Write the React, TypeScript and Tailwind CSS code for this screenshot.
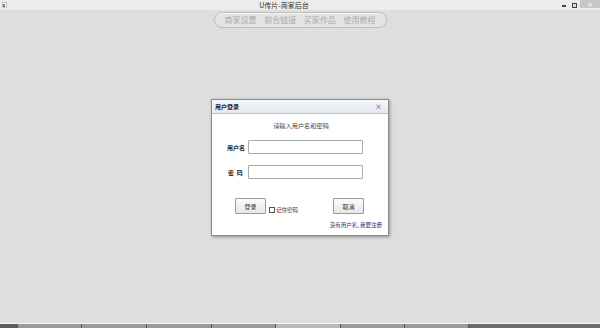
import React from "react";

const font = { fontFamily: '"Noto Sans CJK SC", "Noto Sans", sans-serif' };

export default function App() {
  const segs = [
    { w: 18, c: "bg-[#5c5c5c]" },
    { w: 64, c: "bg-[#9b9b9b]" },
    { w: 65, c: "bg-[#9b9b9b]" },
    { w: 65, c: "bg-[#9b9b9b]" },
    { w: 64, c: "bg-[#9b9b9b]" },
    { w: 65, c: "bg-[#b9b9b9]" },
    { w: 64, c: "bg-[#9b9b9b]" },
    { w: 64, c: "bg-[#9b9b9b]" },
  ];
  return (
    <div className="w-[600px] h-[328px] flex flex-col bg-[#dedede] overflow-hidden" style={font}>
      {/* window title bar */}
      <div className="h-[10px] bg-[#ececec] flex items-center relative">
        <div className="ml-[2px] w-[5px] h-[6px] border border-[#c4c4c4] bg-white flex items-end">
          <div className="w-[2px] h-[3px] bg-[#4f8a96]" />
        </div>
        <div className="flex-1 text-center text-[7px] leading-[10px] text-[#333]">U传片-商家后台</div>
        <div className="flex items-start h-[10px]">
          <div className="w-[6px] h-[10px] flex items-center justify-center mr-[4px]">
            <div className="w-[4px] h-[2px] bg-[#444] mt-[1px]" />
          </div>
          <div className="w-[6px] h-[10px] flex items-center justify-center mr-[3px]">
            <div className="w-[5px] h-[5px] border border-[#444] bg-[#ddd]" />
          </div>
          <div className="w-[20px] h-[8px] bg-[#c6c6c6] flex items-center justify-center text-[7px] leading-none text-white">×</div>
        </div>
      </div>

      {/* body */}
      <div className="flex-1 flex flex-col items-center">
        <div className="mt-[2px] w-[173px] h-[16px] rounded-[8px] border border-[#bdbdbd] bg-[#e3e3e3] shadow-[inset_0_1px_0_#f4f4f4] flex items-center justify-between px-[10px] text-[8px] text-[#ababab]">
          <span>商家设置</span>
          <span>前台链接</span>
          <span>买家作品</span>
          <span>使用教程</span>
        </div>

        {/* dialog */}
        <div className="mt-[71px] w-[178px] h-[137px] border border-[#8c8c8c] bg-white shadow-[1px_1px_3px_rgba(0,0,0,0.35)] flex flex-col">
          <div className="h-[14px] bg-gradient-to-b from-[#f6f8fb] to-[#e4e9f0] border-b border-[#b9c3cf] flex items-center justify-between px-[3px]">
            <span className="text-[6px] font-bold text-[#222]">用户登录</span>
            <span className="text-[7px] text-[#333] mr-[3px] leading-none">×</span>
          </div>
          <div className="flex-1 flex flex-col">
            <div className="mt-[7px] text-center text-[6.2px] leading-[9px] text-[#444] pl-[2px]">请输入用户名和密码</div>
            <div className="mt-[10px] flex items-center h-[14px]">
              <span className="ml-[15px] w-[21px] text-[6px] font-bold text-[#222]">用户名</span>
              <div className="w-[115px] h-[14px] border border-[#a8a8a8] rounded-[1px] bg-white" />
            </div>
            <div className="mt-[11px] flex items-center h-[14px]">
              <span className="ml-[16px] w-[20px] text-[6px] font-bold text-[#222]">密&nbsp;&nbsp;码</span>
              <div className="w-[115px] h-[14px] border border-[#a8a8a8] rounded-[1px] bg-white" />
            </div>
            <div className="mt-[19px] flex items-end h-[16px]">
              <div className="ml-[23px] w-[31px] h-[16px] border border-[#9a9a9a] rounded-[1px] bg-gradient-to-b from-[#fbfbfb] to-[#e4e8ec] flex items-center justify-center text-[6px] text-[#333]">登录</div>
              <div className="ml-[3px] mb-[1px] w-[6px] h-[6px] border border-[#555] bg-white" />
              <span className="ml-[1px] text-[5.5px] leading-[8px] text-[#333]">记住密码</span>
              <div className="ml-[35px] w-[31px] h-[16px] border border-[#9a9a9a] rounded-[1px] bg-gradient-to-b from-[#fbfbfb] to-[#e4e8ec] flex items-center justify-center text-[6px] text-[#333] self-start">取消</div>
            </div>
            <div className="mt-[7px] flex justify-end pr-[6px] text-[5.5px] leading-[8px] text-[#2a2a7a]">没有用户名, 我要注册</div>
          </div>
        </div>
      </div>

      {/* taskbar */}
      <div className="h-[1px] bg-[#f7f7f7]" />
      <div className="h-[4px] flex bg-[#6a6a6a]">
        {segs.map((s, i) => (
          <div key={i} className={`${s.c} h-full border-r border-[#5a5a5a]`} style={{ width: s.w }} />
        ))}
      </div>
    </div>
  );
}
